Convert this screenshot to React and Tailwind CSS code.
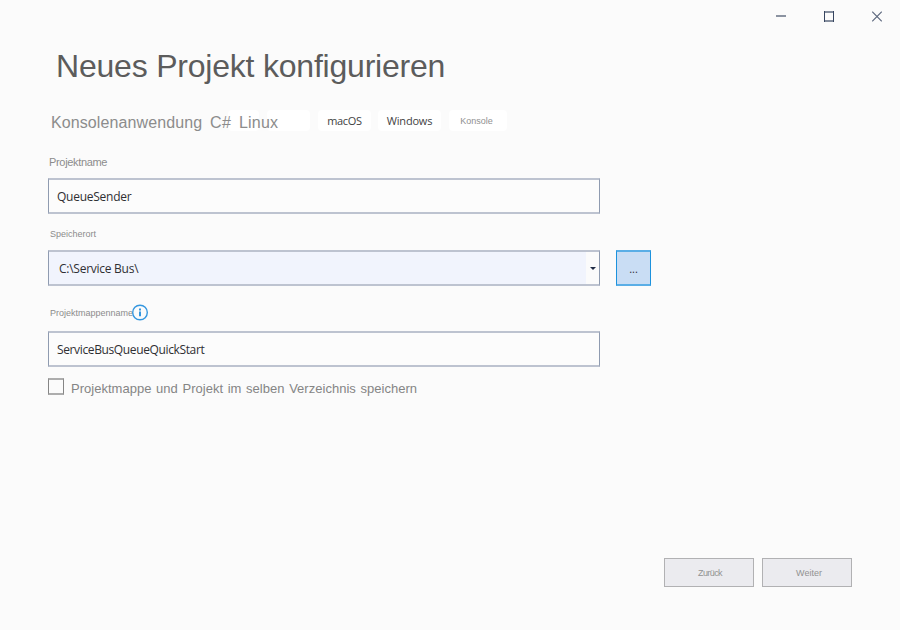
const sans = "font-['Liberation_Sans',Arial,sans-serif]";

function Pill({ className = '', children }) {
  return (
    <span className={`flex h-[21px] items-center justify-center rounded bg-white text-[#424242] ${className}`}>
      {children}
    </span>
  );
}

function Field({ className = '', children }) {
  return (
    <div
      className={`flex h-9 w-[552px] shrink-0 items-center border-x border-y-2 border-x-[#8f9bb0] border-y-[#bdc3d0] text-[12px] text-[#2f2f33] ${className}`}
    >
      {children}
    </div>
  );
}

function InfoIcon() {
  return (
    <svg className="-ml-[2px] h-[17px] w-[16px] shrink-0" viewBox="0 0 16 17" fill="none">
      <circle cx="8" cy="8.5" r="7.3" fill="#fbfbfb" stroke="#3597df" strokeWidth="1.4" />
      <path d="M8 4.5v2M8 7.6v4.6" stroke="#3597df" strokeWidth="2" />
    </svg>
  );
}

function WindowControls() {
  return (
    <div className="flex h-8 justify-end gap-[38px] pr-[18px] pt-[11px]">
      <svg className="h-[11px] w-[10px]" viewBox="0 0 10 11" fill="none">
        <path d="M0 5h10" stroke="#8b93a1" strokeWidth="2" />
      </svg>
      <svg className="h-[11px] w-[10px]" viewBox="0 0 10 11" fill="none">
        <path d="M0 1h10M0 10h10" stroke="#858e9e" strokeWidth="2" />
        <path d="M0.5 0v11M9.5 0v11" stroke="#36445f" strokeWidth="1" />
      </svg>
      <svg className="h-[11px] w-[10px]" viewBox="0 0 10 11" fill="none">
        <path d="M0.2 0.7l9.6 9.6M9.8 0.7l-9.6 9.6" stroke="#5d687e" strokeWidth="1.2" />
      </svg>
    </div>
  );
}

export default function App() {
  return (
    <main className="flex h-[630px] w-[900px] flex-col overflow-hidden bg-[#fbfbfb] font-['Open_Sans','Noto_Sans',sans-serif] whitespace-nowrap">
      <WindowControls />
      <h1 className={`h-[78px] pl-[56px] pt-[14px] text-[32px] leading-[40px] tracking-[-0.21px] text-[#5c5c5c] ${sans}`}>
        Neues Projekt konfigurieren
      </h1>

      <div className="flex h-[21px] pl-[51px]">
        <div className={`flex w-[259px] text-[16px] leading-[25px] text-[#8c8c8c] ${sans}`}>
          <span className="w-[159px] tracking-[0.1px]">Konsolenanwendung</span>
          <span className="z-10 w-[18px] tracking-[0.4px]">C#</span>
          <span className="h-[21px] w-[31px] rounded bg-white pl-[11px] tracking-[0.2px]">
            <span className="relative z-10">Linux</span>
          </span>
          <span className="ml-2 h-[21px] grow rounded bg-white" />
        </div>
        <Pill className="ml-2 w-[53px] pt-[2px] text-[11px] tracking-[-0.3px]">macOS</Pill>
        <Pill className="ml-[7px] w-[63px] pt-[2px] text-[11px] tracking-[-0.2px]">Windows</Pill>
        <Pill className={`ml-2 w-[58px] pr-[3px] pt-[3px] text-[9px] text-[#909090] ${sans}`}>Konsole</Pill>
      </div>

      <section className="flex flex-col pl-12">
        <label className={`h-[47px] pl-px pt-[23px] text-[11px] leading-[16px] tracking-[-0.33px] text-[#8c8c8c] ${sans}`}>
          Projektname
        </label>
        <Field className="bg-[#fcfcfc] pl-2 pt-[2px] tracking-[-0.26px]">QueueSender</Field>

        <label className={`h-9 pl-[2px] pt-3 text-[9px] leading-[16px] text-[#8c8c8c] ${sans}`}>
          Speicherort
        </label>
        <div className="flex gap-4">
          <Field className="bg-[#f1f4fd] pl-[10px]">
            <span className="grow pt-[2px] tracking-[-0.26px]">C:\Service Bus\</span>
            <span className="flex h-8 w-[13px] items-center justify-center bg-[#fbfbfb]">
              <svg className="h-[3px] w-[6px]" viewBox="0 0 6 3">
                <path d="M0 0h6L3 3z" fill="#1f2a44" />
              </svg>
            </span>
          </Field>
          <button className="flex h-9 w-[35px] items-center justify-center border-x border-y-2 border-x-[#1c92dd] border-y-[#5aaee6] bg-[#c9ddf4] pt-[2px] text-[11px] text-[#33333a]">
            ...
          </button>
        </div>

        <div className="flex h-[45px] items-start pt-[18px]">
          <label className={`w-[86px] pl-[2px] pt-px text-[9px] leading-[16px] text-[#8c8c8c] ${sans}`}>
            Projektmappenname
          </label>
          <InfoIcon />
        </div>
        <Field className="bg-[#fcfcfc] pl-2 pt-[2px] tracking-[-0.37px]">ServiceBusQueueQuickStart</Field>

        <div className="flex h-[30px] items-start pt-[11px]">
          <span className="h-[17px] w-4 border-x border-y-2 border-x-[#858585] border-y-[#adadad]" />
          <span className={`pl-[7px] pt-[3px] text-[13px] leading-[16px] tracking-[0.02px] [word-spacing:1px] text-[#858585] ${sans}`}>
            Projektmappe und Projekt im selben Verzeichnis speichern
          </span>
        </div>
      </section>

      <footer className={`mt-auto flex justify-end gap-2 pb-[43px] pr-12 text-[9px] text-[#929292] ${sans}`}>
        <button className="h-[29px] w-[90px] border border-[#b1b1b3] bg-[#ebebef] pl-[2px] pt-[2px] tracking-[-0.6px]">Zurück</button>
        <button className="h-[29px] w-[90px] border border-[#b1b1b3] bg-[#ebebef] pl-[4px] pt-[2px]">Weiter</button>
      </footer>
    </main>
  );
}
